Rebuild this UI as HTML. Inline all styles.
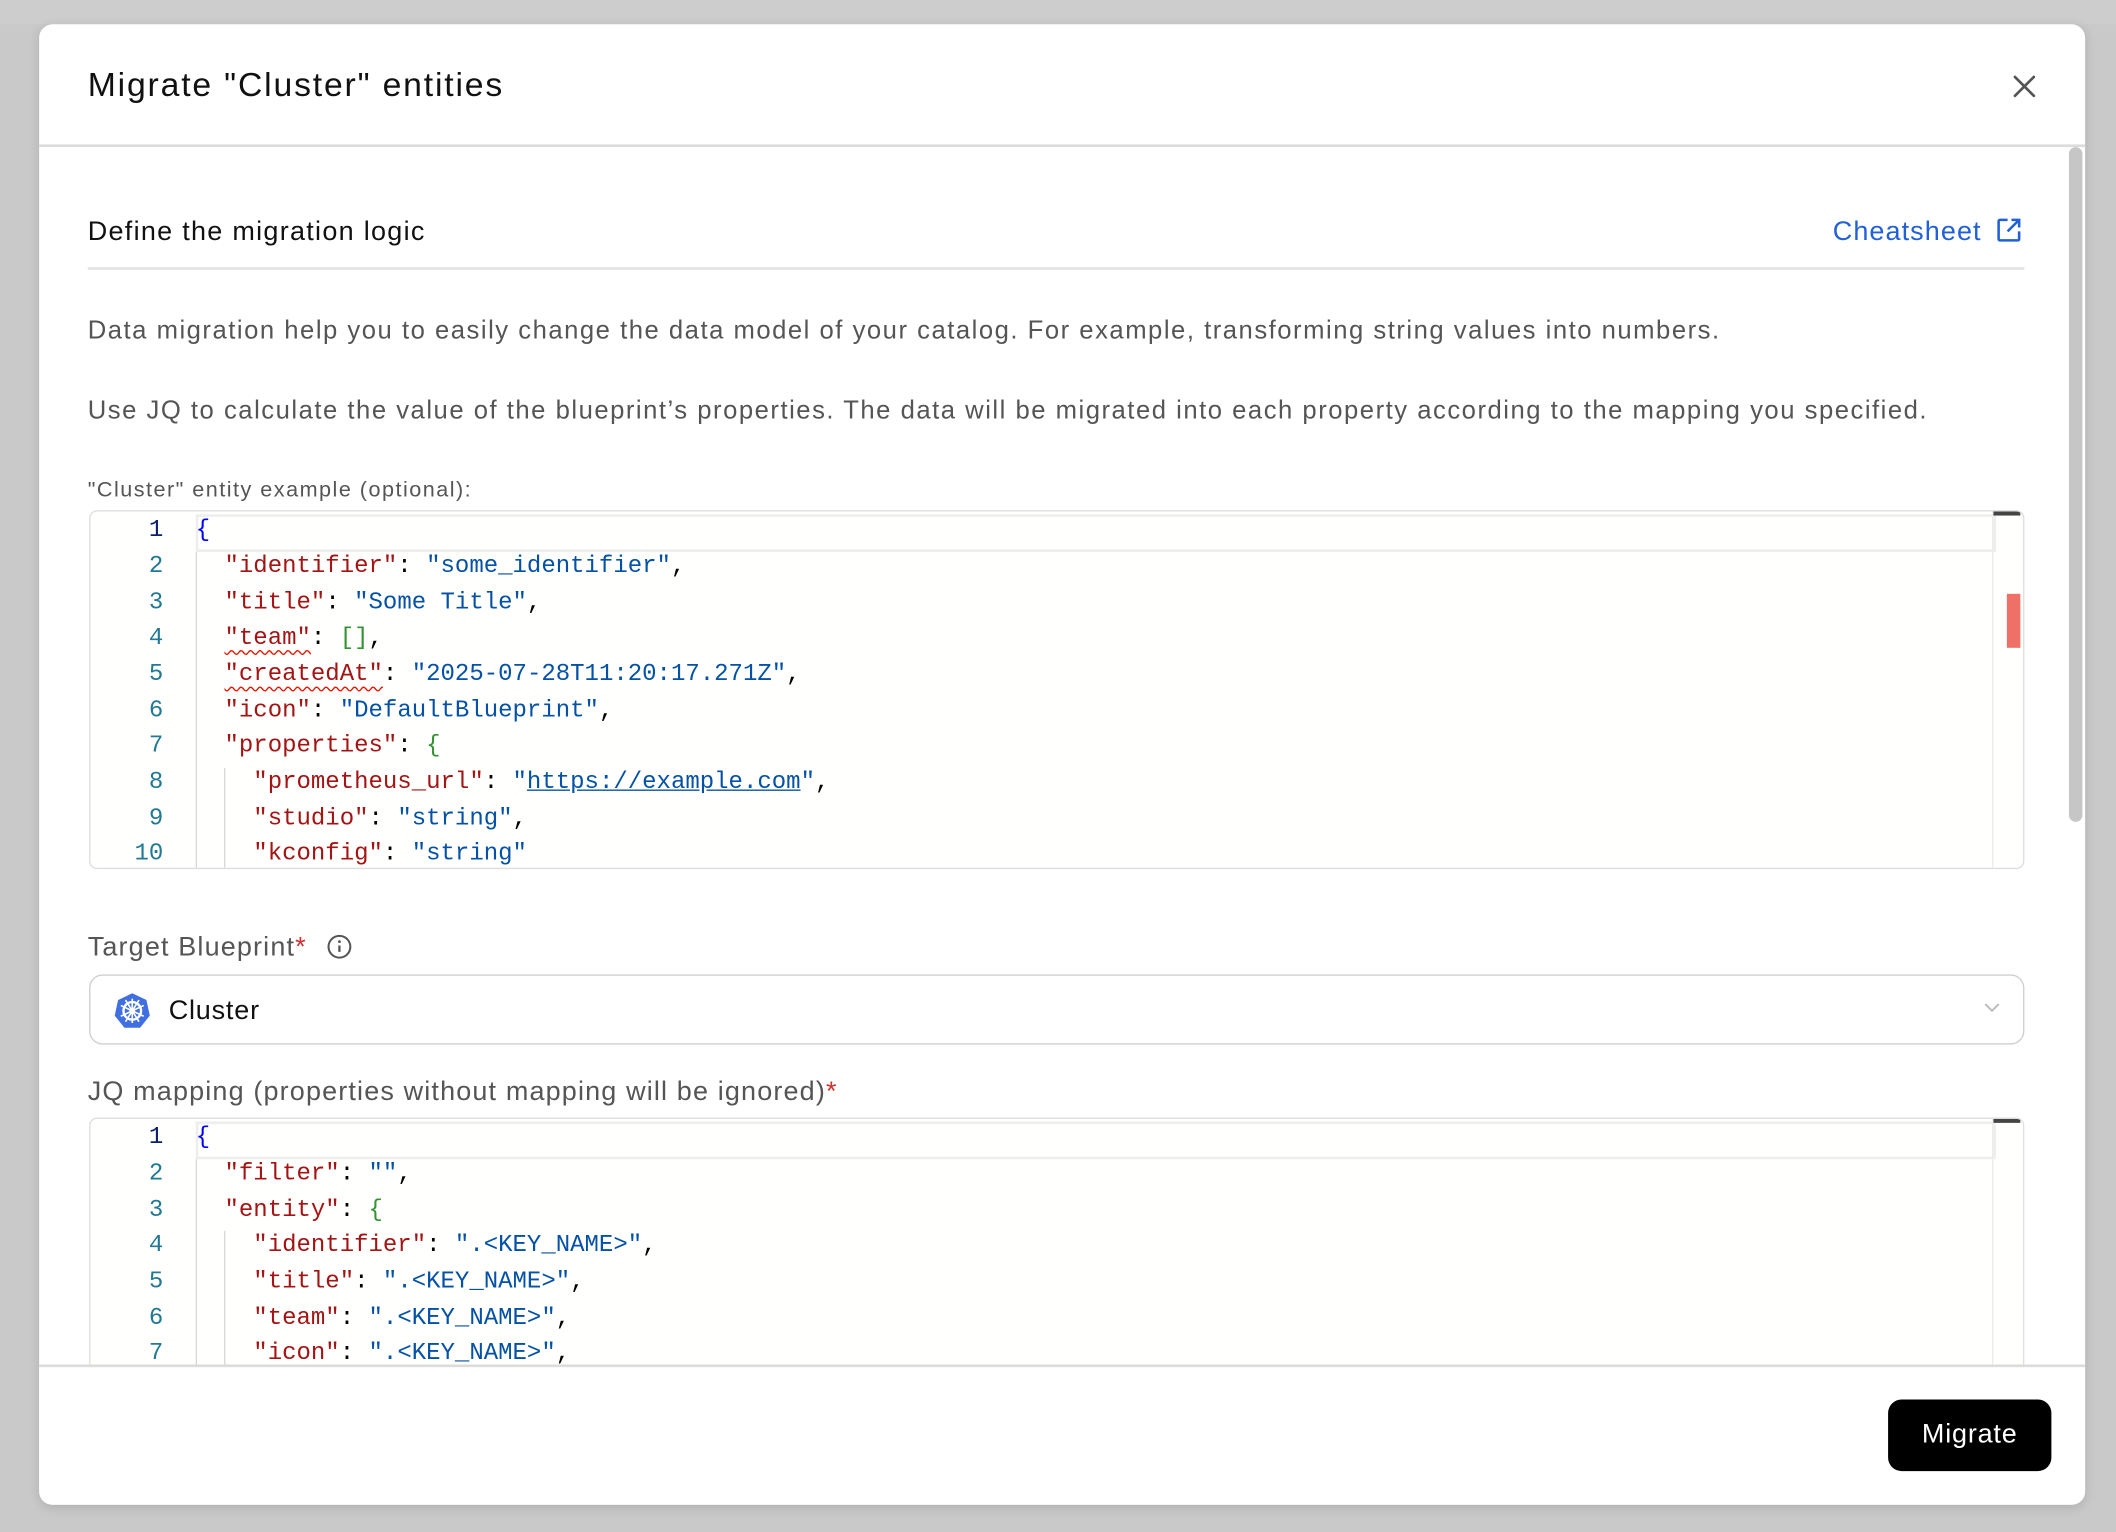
<!DOCTYPE html>
<html><head><meta charset="utf-8">
<style>
html,body{margin:0;padding:0;width:2116px;height:1532px;overflow:hidden;background:#c9c9c9;}
#w{position:absolute;left:0;top:0;width:1568px;height:1135px;transform:scale(1.3496);transform-origin:0 0;font-family:"Liberation Sans",sans-serif;}
.topbar{position:absolute;left:0;top:0;width:1568px;height:18px;background:#cdcdcd;}
.modal{position:absolute;left:29px;top:18px;width:1516px;height:1097px;background:#fff;border-radius:10px;overflow:hidden;box-shadow:0 2px 8px rgba(0,0,0,.12);}
.abs{position:absolute;}
.title{left:36px;top:31px;font-size:25px;font-weight:500;color:#111;letter-spacing:1.35px;}
.hdrline{left:0;top:89px;width:1516px;height:2px;background:#dcdcdc;}
.ftrline{left:0;top:993px;width:1516px;height:2px;background:#dcdcdc;}
.sb{left:1504px;top:91px;width:10px;height:500px;background:#c6c6c6;border-radius:5px;}
.h2{left:36px;top:143px;font-size:20px;font-weight:500;color:#111;letter-spacing:0.95px;}
.cheat{left:1329px;top:143px;font-size:20px;color:#2160d6;letter-spacing:0.8px;}
.line2{left:36px;top:180px;width:1435px;height:2px;background:#e4e4e4;}
.p{left:36px;font-size:19px;color:#555;white-space:nowrap;letter-spacing:1.12px;}
.lbl{left:36px;font-size:16px;color:#555;letter-spacing:1.1px;}
.lbl2{left:36px;font-size:20px;color:#555;letter-spacing:0.85px;}
.req{color:#d32f2f;}
.ed{left:37px;width:1432px;border:1px solid #dedede;border-radius:6px;overflow:hidden;background:#fffffe;}
.code{position:absolute;left:0;top:3px;width:100%;font-family:"Liberation Mono",monospace;font-size:17.8px;}
.ln{position:absolute;left:0;width:54px;text-align:right;color:#237893;}
.tx{position:absolute;left:78px;white-space:pre;color:#000;}
.cur{position:absolute;left:78px;top:2px;right:20px;height:24px;border:2px solid #eeeeee;}
.k{color:#a31515}.s{color:#0451a5}.b{color:#0000ff}.g{color:#319331}
.sq{text-decoration:underline wavy #e51400;text-underline-offset:4px;text-decoration-thickness:1px}
.u{text-decoration:underline;}
.guide{position:absolute;width:1px;background:#d8d8d8;}
.sel{left:37px;top:704px;width:1432px;height:50px;border:1px solid #cfcfcf;border-radius:10px;}
.btn{left:1370px;top:1019px;width:121px;height:53px;background:#000;border-radius:10px;color:#fff;font-size:20px;font-weight:500;text-align:center;line-height:53px;letter-spacing:0.6px;}
</style></head><body><div id="w">
<div class="topbar"></div>
<div class="modal">
 <div class="abs title">Migrate "Cluster" entities</div>
 <svg class="abs" style="left:1462px;top:37px" width="18" height="18" viewBox="0 0 18 18"><path d="M2 2L16 16M16 2L2 16" stroke="#555" stroke-width="2" stroke-linecap="round"/></svg>
 <div class="abs hdrline"></div>
 <div class="abs sb"></div>
 <div class="abs h2">Define the migration logic</div>
 <div class="abs cheat">Cheatsheet <svg width="19" height="19" viewBox="0 0 20 20" style="vertical-align:-2px;margin-left:4px"><path d="M9 2H3a1 1 0 0 0-1 1v14a1 1 0 0 0 1 1h14a1 1 0 0 0 1-1v-6" fill="none" stroke="#2160d6" stroke-width="2"/><path d="M12 2h6v6M18 2L9 11" fill="none" stroke="#2160d6" stroke-width="2"/></svg></div>
 <div class="abs line2"></div>
 <div class="abs p" style="top:217px">Data migration help you to easily change the data model of your catalog. For example, transforming string values into numbers.</div>
 <div class="abs p" style="top:276px">Use JQ to calculate the value of the blueprint’s properties. The data will be migrated into each property according to the mapping you specified.</div>
 <div class="abs lbl" style="top:337px">"Cluster" entity example (optional):</div>

 <div class="abs ed" style="top:360px;height:264px">
  <div class="cur"></div>
  <div class="guide" style="left:78px;top:30px;height:240px"></div>
  <div class="guide" style="left:99px;top:190px;height:80px"></div>
  <div class="abs" style="left:1410px;top:0;width:20px;height:3px;background:#444"></div>
  <div class="abs" style="left:1409px;top:0;width:1px;height:264px;background:#ececec"></div>
  <div class="abs" style="left:1420px;top:61px;width:10px;height:40px;background:#ef7067"></div>
  <div class="code">
   <div class="ln" style="top:1px;color:#0b216f">1</div><div class="tx" style="top:1px"><span class="b">{</span></div>
   <div class="ln" style="top:28px">2</div><div class="tx" style="top:28px">  <span class="k">"identifier"</span>: <span class="s">"some_identifier"</span>,</div>
   <div class="ln" style="top:55px">3</div><div class="tx" style="top:55px">  <span class="k">"title"</span>: <span class="s">"Some Title"</span>,</div>
   <div class="ln" style="top:81px">4</div><div class="tx" style="top:81px">  <span class="k sq">"team"</span>: <span class="g">[]</span>,</div>
   <div class="ln" style="top:108px">5</div><div class="tx" style="top:108px">  <span class="k sq">"createdAt"</span>: <span class="s">"2025-07-28T11:20:17.271Z"</span>,</div>
   <div class="ln" style="top:135px">6</div><div class="tx" style="top:135px">  <span class="k">"icon"</span>: <span class="s">"DefaultBlueprint"</span>,</div>
   <div class="ln" style="top:161px">7</div><div class="tx" style="top:161px">  <span class="k">"properties"</span>: <span class="g">{</span></div>
   <div class="ln" style="top:188px">8</div><div class="tx" style="top:188px">    <span class="k">"prometheus_url"</span>: <span class="s">"<span class="u">https://example.com</span>"</span>,</div>
   <div class="ln" style="top:215px">9</div><div class="tx" style="top:215px">    <span class="k">"studio"</span>: <span class="s">"string"</span>,</div>
   <div class="ln" style="top:241px">10</div><div class="tx" style="top:241px">    <span class="k">"kconfig"</span>: <span class="s">"string"</span></div>
  </div>
 </div>

 <div class="abs lbl2" style="top:673px">Target Blueprint<span class="req">*</span> <svg width="19" height="19" viewBox="0 0 20 20" style="vertical-align:-3px;margin-left:8px"><circle cx="10" cy="10" r="8.5" fill="none" stroke="#555" stroke-width="1.6"/><path d="M10 9v5" stroke="#555" stroke-width="1.8"/><circle cx="10" cy="6" r="1.1" fill="#555"/></svg></div>
 <div class="abs sel">
  <svg class="abs" style="left:17px;top:12px" width="28" height="28" viewBox="0 0 28 28"><path d="M14 1L24.5 6 27 17.5 19.8 26.5H8.2L1 17.5 3.5 6Z" fill="#3f6fe0"/><circle cx="14" cy="14" r="6.5" fill="none" stroke="#fff" stroke-width="1.8"/><path d="M14 5v18M5.5 10l17 8M22.5 10l-17 8M9 22l10-16M19 22L9 6" stroke="#fff" stroke-width="1.2"/><circle cx="14" cy="14" r="2.2" fill="#fff"/></svg>
  <div class="abs" style="left:58px;top:15px;font-size:20px;color:#111;letter-spacing:0.6px">Cluster</div>
  <svg class="abs" style="left:1403px;top:20px" width="12" height="8" viewBox="0 0 12 8"><path d="M1 1l5 5 5-5" fill="none" stroke="#bbb" stroke-width="1.4"/></svg>
 </div>
 <div class="abs lbl2" style="top:780px">JQ mapping (properties without mapping will be ignored)<span class="req">*</span></div>

 <div class="abs ed" style="top:810px;height:240px;border-bottom:none">
  <div class="cur"></div>
  <div class="guide" style="left:78px;top:30px;height:220px"></div>
  <div class="guide" style="left:99px;top:83px;height:160px"></div>
  <div class="abs" style="left:1410px;top:0;width:20px;height:3px;background:#444"></div>
  <div class="abs" style="left:1409px;top:0;width:1px;height:240px;background:#ececec"></div>
  <div class="code">
   <div class="ln" style="top:1px;color:#0b216f">1</div><div class="tx" style="top:1px"><span class="b">{</span></div>
   <div class="ln" style="top:28px">2</div><div class="tx" style="top:28px">  <span class="k">"filter"</span>: <span class="s">""</span>,</div>
   <div class="ln" style="top:55px">3</div><div class="tx" style="top:55px">  <span class="k">"entity"</span>: <span class="g">{</span></div>
   <div class="ln" style="top:81px">4</div><div class="tx" style="top:81px">    <span class="k">"identifier"</span>: <span class="s">".&lt;KEY_NAME&gt;"</span>,</div>
   <div class="ln" style="top:108px">5</div><div class="tx" style="top:108px">    <span class="k">"title"</span>: <span class="s">".&lt;KEY_NAME&gt;"</span>,</div>
   <div class="ln" style="top:135px">6</div><div class="tx" style="top:135px">    <span class="k">"team"</span>: <span class="s">".&lt;KEY_NAME&gt;"</span>,</div>
   <div class="ln" style="top:161px">7</div><div class="tx" style="top:161px">    <span class="k">"icon"</span>: <span class="s">".&lt;KEY_NAME&gt;"</span>,</div>
  </div>
 </div>

 <div class="abs" style="left:0;top:995px;width:1516px;height:102px;background:#fff"></div>
 <div class="abs ftrline"></div>
 <div class="abs btn">Migrate</div>
</div>
</div></body></html>
